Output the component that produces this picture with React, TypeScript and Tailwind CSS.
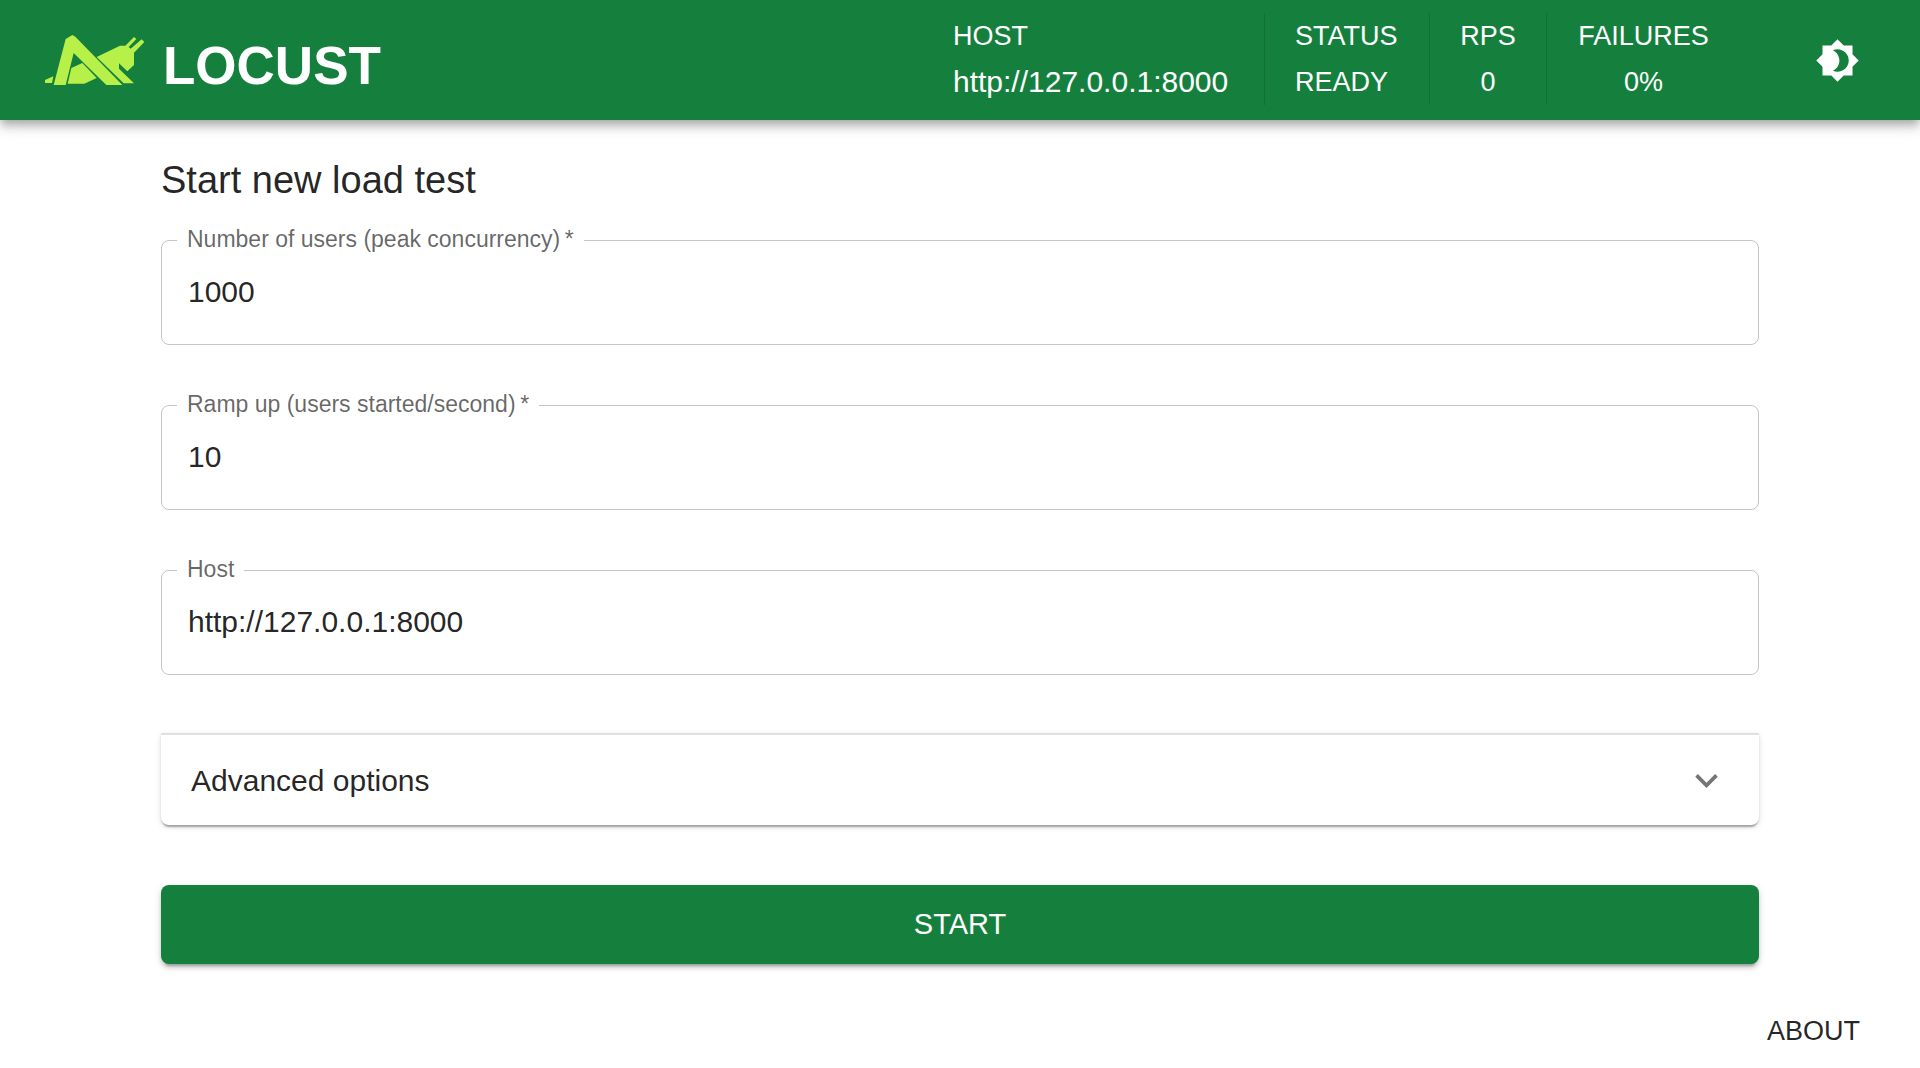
import React, { useState } from 'react';
import { MdBrightness4, MdExpandMore } from 'react-icons/md';

const Logo = () => (
  <a href="#home" className="flex items-center gap-[18px]">
    <svg viewBox="45 44 300 153" className="h-[51px] w-[100px] fill-[#b8f04a]" aria-hidden="true">
      <path d="M45 179 L70 168 L66 188 H45 Z" />
      <path d="M107 56 L127 44 L136 49 L277 194 H229 L131 98 L107 194 H71 Z" />
      <path d="M124 143 L157 128 L200 173 L163 190 H113 Z" />
      <path d="M200 110 L270 76 H286 L312 50 L319 56 L296 80 L302 85 L335 57 L343 65 L312 97 V134 L292 153 L267 129 V145 L312 189 H281 Z" />
    </svg>
    <span className="pt-3 text-[53px] leading-[60px] font-bold text-white">
      LOCUST
    </span>
  </a>
);

const Header = () => {
  const [stats] = useState({ status: 'READY', rps: '0', failures: '0%' });

  return (
    <header className="bg-[#15803d] text-white shadow-[0_4px_8px_-2px_rgba(0,0,0,0.2),0_8px_9px_0_rgba(0,0,0,0.14),0_2px_19px_0_rgba(0,0,0,0.12)]">
      <div className="flex h-[120px] items-center justify-between px-[45px]">
        <Logo />
        <div className="flex items-center gap-[60px]">
          <div className="flex divide-x divide-black/12 pb-0.5 text-[27px] leading-[46px]">
            <div className="min-w-[342px] px-[30px]">
              <div>HOST</div>
              <div className="text-[30px]">http://127.0.0.1:8000</div>
            </div>
            <div className="min-w-[165px] px-[30px]">
              <div>STATUS</div>
              <div>{stats.status}</div>
            </div>
            <div className="min-w-[117px] px-[30px] text-center">
              <div>RPS</div>
              <div>{stats.rps}</div>
            </div>
            <div className="min-w-[163px] pl-[30px] text-center">
              <div>FAILURES</div>
              <div>{stats.failures}</div>
            </div>
          </div>
          <button type="button" aria-label="Toggle theme" className="ml-[30px] rounded-full p-[15px]">
            <MdBrightness4 className="size-[45px]" />
          </button>
        </div>
      </div>
    </header>
  );
};

type FieldProps = {
  id: string;
  label: string;
  initial: string;
  required?: boolean;
};

const Field = ({ id, label, initial, required }: FieldProps) => {
  const [value, setValue] = useState(initial);

  return (
    <fieldset className="rounded-lg border border-black/23 pb-3">
      <legend className="ml-[15px] px-[10px] pb-0.5 text-[23px] leading-[22px] text-black/60">
        <label htmlFor={id}>
          {label}
          {required && '\u2009*'}
        </label>
      </legend>
      <input
        id={id}
        name={id}
        type="text"
        required={required}
        value={value}
        onChange={(e) => setValue(e.target.value)}
        className="block h-20 w-full bg-transparent px-[26px] text-[30px] outline-none"
      />
    </fieldset>
  );
};

const App = () => {
  const [isOpen, setIsOpen] = useState(false);

  return (
    <div className="bg-white font-['Liberation_Sans',Arial,sans-serif] text-black/87">
      <Header />
      <main className="mx-auto max-w-[1688px] px-[45px] pt-[30px]">
        <h1 className="mb-[18px] text-[38px] leading-[60px]">Start new load test</h1>
        <form className="flex flex-col" onSubmit={(e) => e.preventDefault()}>
          <div className="mb-[58px] flex flex-col gap-12">
            <Field id="userCount" label="Number of users (peak concurrency)" initial="1000" required />
            <Field id="spawnRate" label="Ramp up (users started/second)" initial="10" required />
            <Field id="host" label="Host" initial="http://127.0.0.1:8000" />
          </div>
          <div className="mb-[60px] rounded-b-lg border-t-2 border-black/12 shadow-[0_4px_2px_-2px_rgba(0,0,0,0.2),0_2px_2px_0_rgba(0,0,0,0.14),0_2px_6px_0_rgba(0,0,0,0.12)]">
            <button
              type="button"
              aria-expanded={isOpen}
              onClick={() => setIsOpen(!isOpen)}
              className="flex h-[90px] w-full items-center justify-between px-[30px] text-[30px]"
            >
              Advanced options
              <MdExpandMore className="size-[45px] text-black/54" />
            </button>
          </div>
          <button
            type="submit"
            className="h-[79px] rounded-lg bg-[#15803d] text-[29px] text-white shadow-[0_6px_2px_-4px_rgba(0,0,0,0.2),0_4px_4px_0_rgba(0,0,0,0.14),0_2px_9px_0_rgba(0,0,0,0.12)]"
          >
            START
          </button>
        </form>
      </main>
      <footer className="flex justify-end px-[45px] pt-[33px]">
        <button type="button" className="px-[15px] py-[11px] text-[27px] leading-[46px]">
          ABOUT
        </button>
      </footer>
    </div>
  );
};

export default App;
